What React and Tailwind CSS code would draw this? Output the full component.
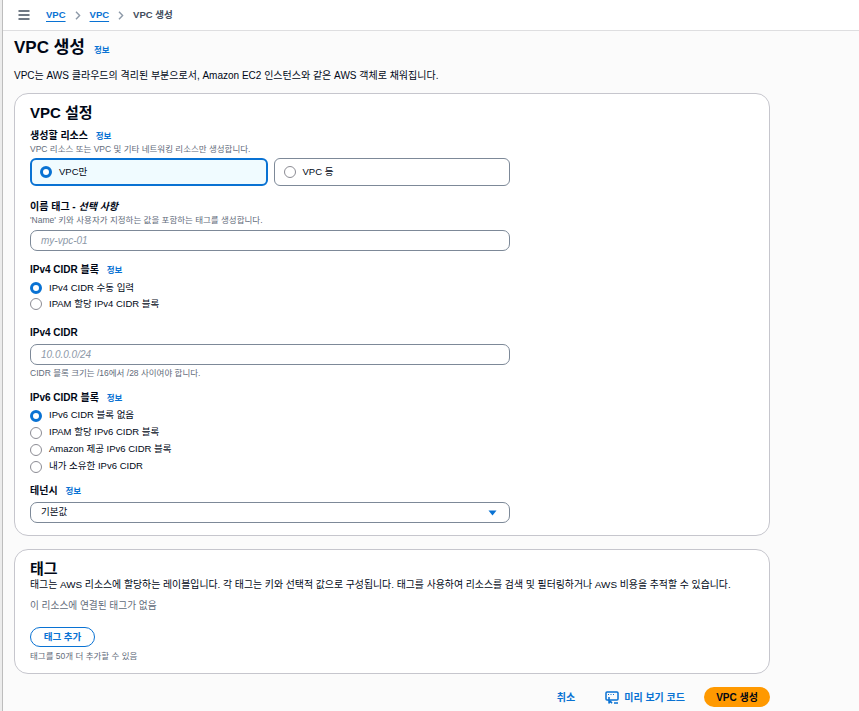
import React from "react";

const FONT = { fontFamily: '"Liberation Sans", "Noto Sans CJK KR", sans-serif' };

function Info({ className = "" }) {
  return <span className={"text-[8.5px] font-bold text-[#0972d3] " + className}>정보</span>;
}

function Radio({ checked }) {
  return checked ? (
    <span className="inline-block w-[12px] h-[12px] rounded-full border-[3.5px] border-[#0972d3] bg-white shrink-0" />
  ) : (
    <span className="inline-block w-[12px] h-[12px] rounded-full border border-[#8c8c94] bg-white shrink-0" />
  );
}

function RadioRow({ checked, children, h = "h-[16px]" }) {
  return (
    <div className={"flex items-center gap-[7px] " + h}>
      <Radio checked={checked} />
      <span className="text-[9.5px] text-[#000716]">{children}</span>
    </div>
  );
}

function Label({ children, className = "" }) {
  return <div className={"text-[10px] font-bold leading-[14px] text-[#000716] " + className}>{children}</div>;
}

function Desc({ children, className = "" }) {
  return <div className={"text-[8.5px] leading-[12px] text-[#5f6b7a] " + className}>{children}</div>;
}

function PreviewIcon() {
  return (
    <svg width="14" height="13" viewBox="0 0 14 13" fill="none" stroke="#0972d3" strokeWidth="1.5">
      <rect x="1" y="1" width="12" height="8" rx="1" />
      <path d="M3 3.5h1M5.5 3.5h1M8 3.5h1" strokeWidth="1.2" />
      <path d="M4 6l0 6 1.6-1.6 1.4 1.8" strokeLinejoin="round" />
      <path d="M9 12h4" />
    </svg>
  );
}

function Chevron() {
  return (
    <svg width="6" height="9" viewBox="0 0 6 9" fill="none" stroke="#8d99a8" strokeWidth="1.4">
      <path d="M1 0.8l3.6 3.7L1 8.2" />
    </svg>
  );
}

export default function App() {
  return (
    <div className="min-h-screen w-full bg-[#fbfbfb] flex" style={FONT}>
      <div className="w-[3px] shrink-0 bg-[#ececec] border-r border-[#bdbdbd]" />
      <div className="flex-1">
        {/* breadcrumb */}
        <div className="h-[31px] bg-white border-b border-[#dedee0] flex items-center pl-[15px] text-[9.5px] font-bold">
          <svg width="12" height="10" viewBox="0 0 12 10" stroke="#414d5c" strokeWidth="1.5">
            <path d="M0.5 1h11M0.5 5h11M0.5 9h11" />
          </svg>
          <span className="ml-[16px] text-[#0972d3] underline underline-offset-[3px]">VPC</span>
          <span className="ml-[9px] flex"><Chevron /></span>
          <span className="ml-[9px] text-[#0972d3] underline underline-offset-[3px]">VPC</span>
          <span className="ml-[9px] flex"><Chevron /></span>
          <span className="ml-[9px] text-[#414d5c]">VPC 생성</span>
        </div>

        <div className="pl-[11px] w-[767px]">
          {/* title */}
          <div className="mt-[5px] flex items-baseline h-[24px] leading-[24px]">
            <h1 className="text-[17px] font-bold text-[#000716]">VPC 생성</h1>
            <Info className="ml-[9px]" />
          </div>
          <div className="mt-[9px] text-[10px] leading-[14px] text-[#000716]">
            VPC는 AWS 클라우드의 격리된 부분으로서, Amazon EC2 인스턴스와 같은 AWS 객체로 채워집니다.
          </div>

          {/* VPC settings card */}
          <div className="mt-[10px] w-[756px] bg-white border border-[#c6c6cd] rounded-[14px] pl-[15px] pt-[9px] pb-[12px]">
            <h2 className="text-[15px] font-bold leading-[20px] text-[#000716]">VPC 설정</h2>
            <Label className="mt-[6px]">
              생성할 리소스 <Info className="ml-[5px]" />
            </Label>
            <Desc>VPC 리소스 또는 VPC 및 기타 네트워킹 리소스만 생성합니다.</Desc>
            <div className="mt-[3px] flex gap-[6px] w-[480px]">
              <div className="flex-1 h-[28px] rounded-[6px] border-2 border-[#0972d3] bg-[#f0fbff] flex items-center pl-[8px] gap-[7px]">
                <Radio checked />
                <span className="text-[9.5px] text-[#000716]">VPC만</span>
              </div>
              <div className="flex-1 h-[28px] rounded-[6px] border border-[#7d8998] bg-white flex items-center pl-[9px] gap-[7px]">
                <Radio />
                <span className="text-[9.5px] text-[#000716]">VPC 등</span>
              </div>
            </div>

            <Label className="mt-[14px]">
              이름 태그 - <i>선택 사항</i>
            </Label>
            <Desc>'Name' 키와 사용자가 지정하는 값을 포함하는 태그를 생성합니다.</Desc>
            <div className="mt-[4px] w-[480px] h-[21px] rounded-[7px] border border-[#7d8998] flex items-center pl-[10px]">
              <span className="text-[10px] italic text-[#8d99a8]">my-vpc-01</span>
            </div>

            <Label className="mt-[12px]">
              IPv4 CIDR 블록 <Info className="ml-[5px]" />
            </Label>
            <div className="mt-[3px]">
              <RadioRow checked>IPv4 CIDR 수동 입력</RadioRow>
              <RadioRow>IPAM 할당 IPv4 CIDR 블록</RadioRow>
            </div>

            <Label className="mt-[14px]">IPv4 CIDR</Label>
            <div className="mt-[4px] w-[480px] h-[21px] rounded-[7px] border border-[#7d8998] flex items-center pl-[10px]">
              <span className="text-[10px] italic text-[#8d99a8]">10.0.0.0/24</span>
            </div>
            <Desc className="mt-[2px]">CIDR 블록 크기는 /16에서 /28 사이여야 합니다.</Desc>

            <Label className="mt-[12px]">
              IPv6 CIDR 블록 <Info className="ml-[5px]" />
            </Label>
            <div className="mt-[2px]">
              <RadioRow checked h="h-[17px]">IPv6 CIDR 블록 없음</RadioRow>
              <RadioRow h="h-[17px]">IPAM 할당 IPv6 CIDR 블록</RadioRow>
              <RadioRow h="h-[17px]">Amazon 제공 IPv6 CIDR 블록</RadioRow>
              <RadioRow h="h-[17px]">내가 소유한 IPv6 CIDR</RadioRow>
            </div>

            <Label className="mt-[9px]">
              테넌시 <Info className="ml-[5px]" />
            </Label>
            <div className="mt-[4px] w-[480px] h-[21px] rounded-[7px] border border-[#7d8998] flex items-center justify-between pl-[10px] pr-[12px]">
              <span className="text-[9.5px] text-[#000716]">기본값</span>
              <svg width="9" height="6" viewBox="0 0 9 6"><path d="M0.5 0.5h8L4.5 5.5z" fill="#0972d3" /></svg>
            </div>
          </div>

          {/* tags card */}
          <div className="mt-[13px] w-[756px] bg-white border border-[#c6c6cd] rounded-[14px] pl-[15px] pt-[9px] pb-[11px]">
            <h2 className="text-[15px] font-bold leading-[20px] text-[#000716]">태그</h2>
            <div className="text-[9.9px] leading-[12px] text-[#000716]">
              태그는 AWS 리소스에 할당하는 레이블입니다. 각 태그는 키와 선택적 값으로 구성됩니다. 태그를 사용하여 리소스를 검색 및 필터링하거나 AWS 비용을 추적할 수 있습니다.
            </div>
            <div className="mt-[9px] text-[9.7px] leading-[12px] text-[#5f6b7a]">이 리소스에 연결된 태그가 없음</div>
            <div className="mt-[15px] w-[65px] h-[20px] rounded-full border-[1.5px] border-[#0972d3] flex items-center justify-center text-[9.5px] font-bold text-[#0972d3]">
              태그 추가
            </div>
            <Desc className="mt-[3px]">태그를 50개 더 추가할 수 있음</Desc>
          </div>

          {/* footer */}
          <div className="mt-[13px] w-[756px] flex items-center justify-end">
            <span className="text-[10px] font-bold text-[#0972d3]">취소</span>
            <span className="ml-[30px] flex items-center gap-[5px] text-[10px] font-bold text-[#0972d3]">
              <PreviewIcon />
              미리 보기 코드
            </span>
            <span className="ml-[19px] w-[66px] h-[20px] rounded-full bg-[#ff9900] flex items-center justify-center text-[10px] font-bold text-[#000716]">
              VPC 생성
            </span>
          </div>
        </div>
      </div>
    </div>
  );
}
